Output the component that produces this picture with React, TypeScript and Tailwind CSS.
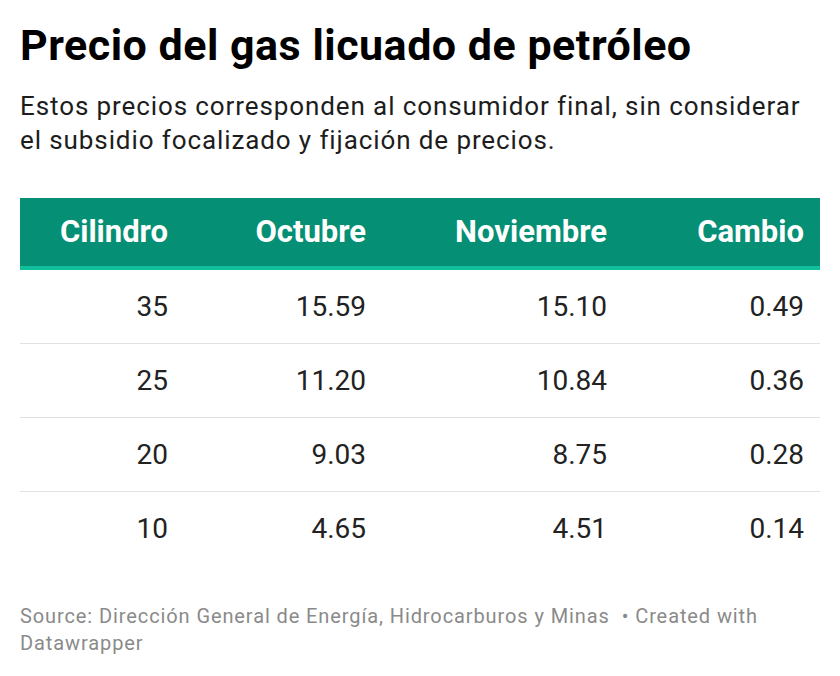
const rows = [
  { cil: "35", oct: "15.59", nov: "15.10", cam: "0.49" },
  { cil: "25", oct: "11.20", nov: "10.84", cam: "0.36" },
  { cil: "20", oct: "9.03", nov: "8.75", cam: "0.28" },
  { cil: "10", oct: "4.65", nov: "4.51", cam: "0.14" },
];

const cols = "grid grid-cols-[164px_198px_241px_197px]";

export default function App() {
  return (
    <div className="min-h-screen bg-white px-5 pt-5 font-['Roboto',sans-serif]">
      <h1 className="text-[43px] font-bold leading-[50px] tracking-[0.5px] text-[#000000]">
        Precio del gas licuado de petróleo
      </h1>
      <p className="mt-[19px] text-[26px] leading-[34px] tracking-[0.9px] text-[#1d1d1d]">
        Estos precios corresponden al consumidor final, sin considerar el subsidio focalizado y fijación de precios.
      </p>

      <div className="mt-[41px] w-[800px]">
        <div className={`${cols} h-[72px] items-center border-b-[4px] border-[#12bf9c] bg-[#058f74] text-[31px] font-bold text-white`}>
          <div className="pr-4 text-right">Cilindro</div>
          <div className="pr-4 text-right">Octubre</div>
          <div className="pr-4 text-right">Noviembre</div>
          <div className="pr-4 text-right">Cambio</div>
        </div>
        {rows.map((r, i) => (
          <div
            key={r.cil}
            className={`${cols} h-[74px] items-center text-[28px] text-[#222222] ${
              i < rows.length - 1 ? "border-b border-[#e2e2e2]" : ""
            }`}
          >
            <div className="pr-4 text-right">{r.cil}</div>
            <div className="pr-4 text-right">{r.oct}</div>
            <div className="pr-4 text-right">{r.nov}</div>
            <div className="pr-4 text-right">{r.cam}</div>
          </div>
        ))}
      </div>

      <div className="mt-[37px] w-[800px] text-[20px] leading-[27px] tracking-[0.9px] text-[#8a8a8a]">
        <div className="flex gap-3">
          <span>Source: Dirección General de Energía, Hidrocarburos y Minas</span>
          <span>• Created with</span>
        </div>
        <div>Datawrapper</div>
      </div>
    </div>
  );
}
